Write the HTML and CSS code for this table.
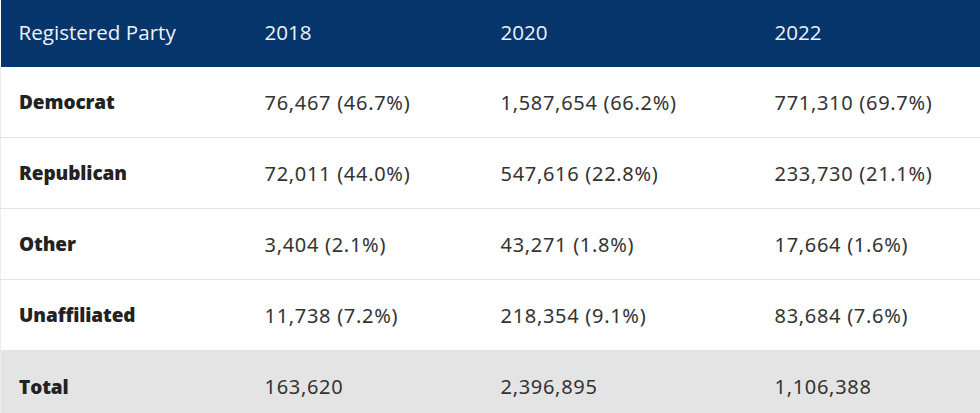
FILE: index.html
```html
<!DOCTYPE html>
<html lang="en">
<head>
<meta charset="utf-8">
<title>Registered Party</title>
<link rel="stylesheet" href="styles.css">
</head>
<body>
<table class="reg-table">
  <colgroup>
    <col class="c1"><col class="c2"><col class="c3"><col class="c4">
  </colgroup>
  <thead>
    <tr>
      <th class="party-head">Registered Party</th>
      <th>2018</th>
      <th>2020</th>
      <th>2022</th>
    </tr>
  </thead>
  <tbody>
    <tr>
      <td class="label">Democrat</td>
      <td>76,467 (46.7%)</td>
      <td>1,587,654 (66.2%)</td>
      <td>771,310 (69.7%)</td>
    </tr>
    <tr>
      <td class="label">Republican</td>
      <td>72,011 (44.0%)</td>
      <td>547,616 (22.8%)</td>
      <td>233,730 (21.1%)</td>
    </tr>
    <tr>
      <td class="label">Other</td>
      <td>3,404 (2.1%)</td>
      <td>43,271 (1.8%)</td>
      <td>17,664 (1.6%)</td>
    </tr>
    <tr>
      <td class="label">Unaffiliated</td>
      <td>11,738 (7.2%)</td>
      <td>218,354 (9.1%)</td>
      <td>83,684 (7.6%)</td>
    </tr>
    <tr class="total">
      <td class="label">Total</td>
      <td>163,620</td>
      <td>2,396,895</td>
      <td>1,106,388</td>
    </tr>
  </tbody>
</table>
</body>
</html>
```
FILE: styles.css
```css
html, body {
  margin: 0;
  padding: 0;
  background: #ffffff;
}

.reg-table {
  width: 980px;
  border-collapse: collapse;
  table-layout: fixed;
}

.c1 { width: 246px; }
.c2 { width: 236px; }
.c3 { width: 274px; }
.c4 { width: 224px; }

.reg-table thead tr {
  background: #05356a;
}

.reg-table th {
  height: 63px;
  padding: 0 0 4px 18px;
  text-align: left;
  font-family: "Open Sans", "Noto Sans", sans-serif;
  font-weight: 400;
  font-size: 20.6px;
  color: #eef3f8;
  vertical-align: middle;
}

.reg-table td {
  height: 70px;
  padding: 0 0 0 18px;
  text-align: left;
  vertical-align: middle;
  font-family: "Noto Sans", "Open Sans", sans-serif;
  font-size: 20px;
  letter-spacing: 0.7px;
  color: #333333;
  border-bottom: 1px solid #e4e4e4;
}

.reg-table td.label {
  font-family: "Open Sans", "Noto Sans", sans-serif;
  font-weight: 800;
  font-size: 19px;
  letter-spacing: -0.1px;
  color: #222222;
  border-left: 1px solid #ececec;
}

.reg-table tr.total td {
  background: #e4e4e4;
  border-bottom: none;
  height: 71px;
}
```
